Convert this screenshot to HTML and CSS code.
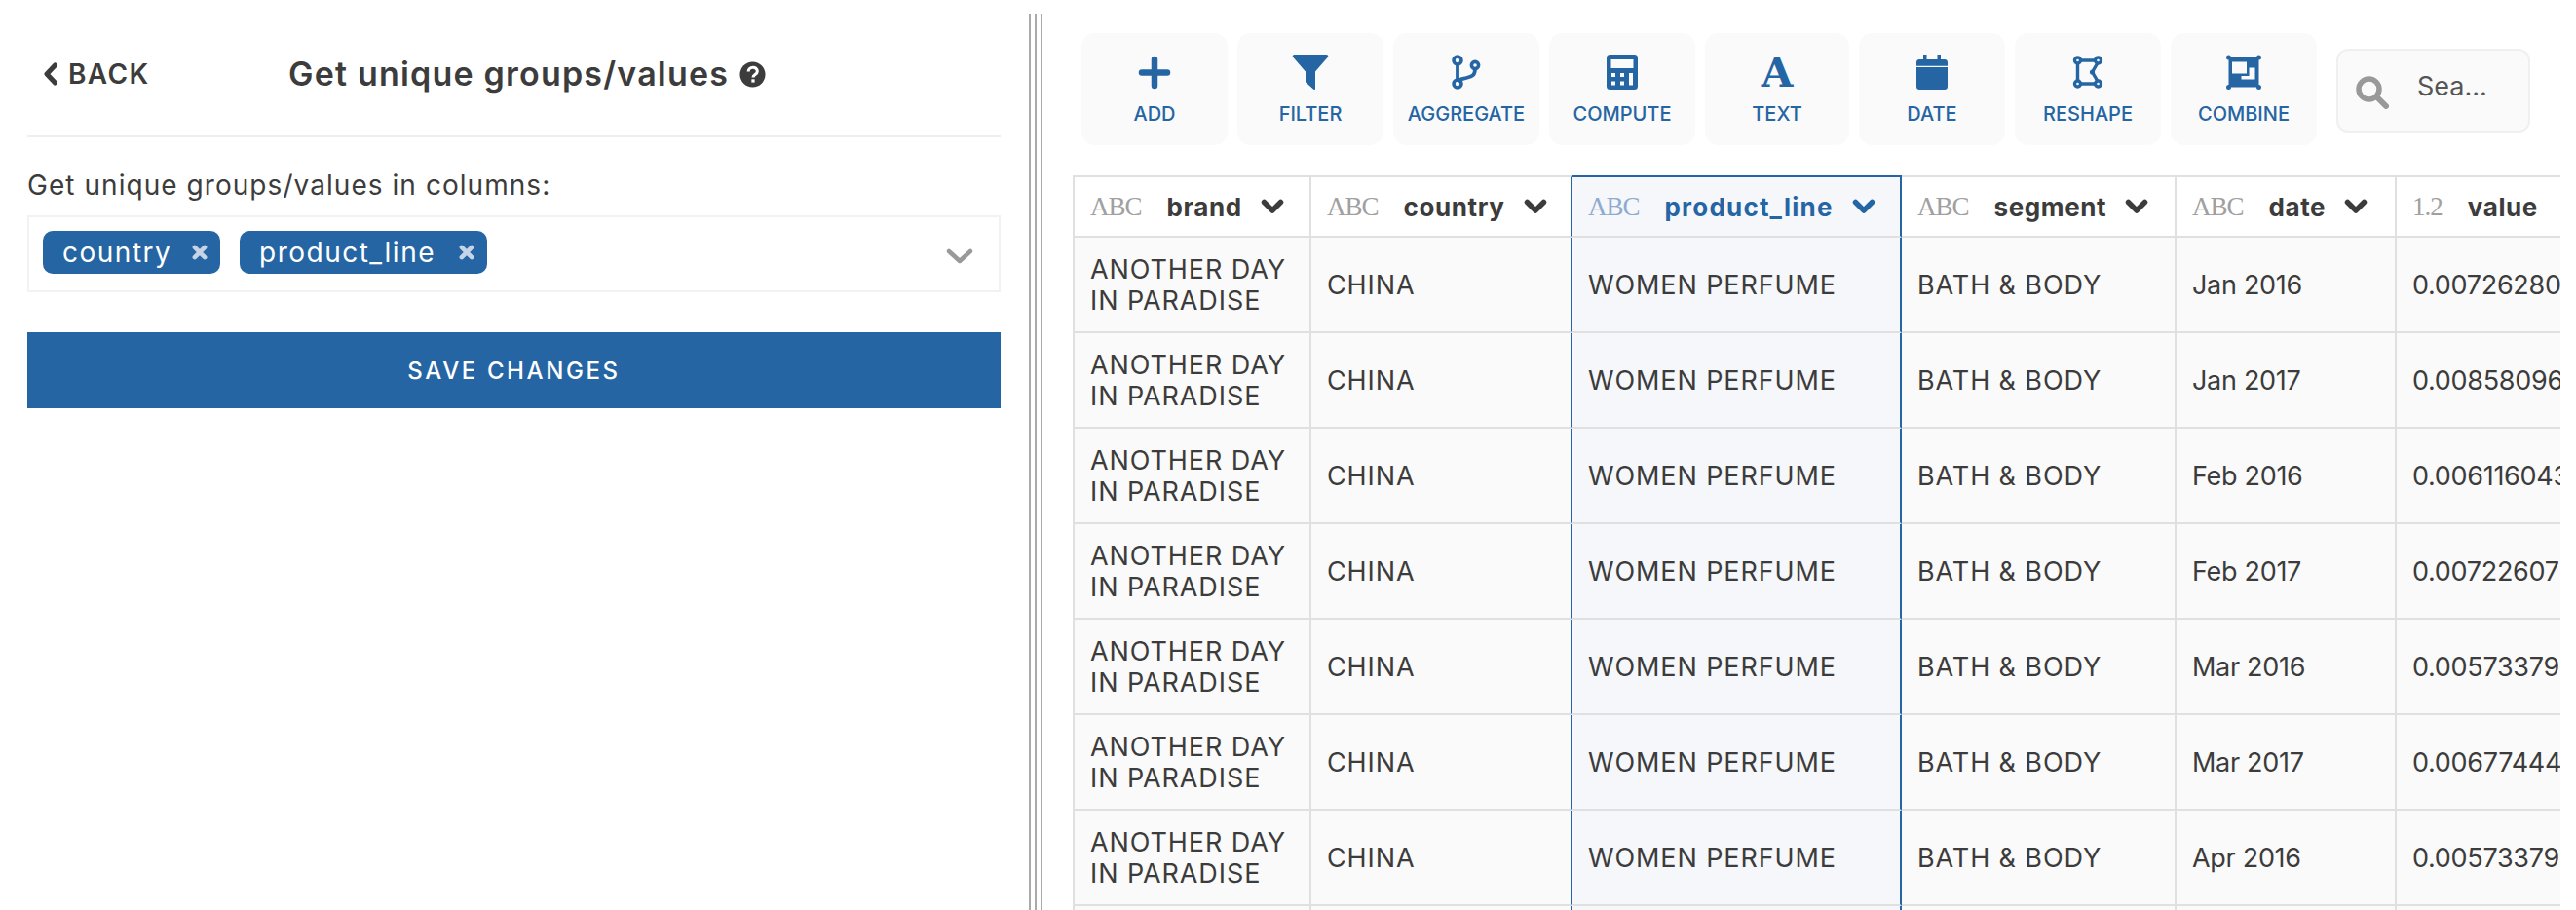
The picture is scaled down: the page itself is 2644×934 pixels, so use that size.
FILE: index.html
```html
<!DOCTYPE html>
<html lang="en">
<head>
<meta charset="utf-8">
<title>Get unique groups/values</title>
<link rel="stylesheet" href="styles.css">
</head>
<body>
<div class="app">
  <aside class="panel">
    <header class="panel-head">
      <a class="back">
        <svg class="back-icon" viewBox="0 0 16 24"><path d="M12.5 3 4 12l8.500 9" fill="none" stroke="currentColor" stroke-width="5" stroke-linecap="round" stroke-linejoin="round"/></svg>
        <span>BACK</span>
      </a>
      <h1 class="title">Get unique groups/values</h1>
      <svg class="help" viewBox="0 0 28 28"><circle cx="14" cy="14" r="13.500" fill="#3c3c3c"/><path d="M9.500 11c0-6 9.500-6 9.500-.3 0 3.300-4.500 3.300-4.500 6.300" fill="none" stroke="#fff" stroke-width="3.200"/><rect x="12.800" y="19" width="3.400" height="3.400" fill="#fff"/></svg>
    </header>
    <label class="field-label">Get unique groups/values in columns:</label>
    <div class="select">
      <span class="chip chip-country">country<svg class="chip-x" viewBox="0 0 14 14"><path d="M2.500 2.500l9 9M11.500 2.500l-9 9" stroke="currentColor" stroke-width="4" stroke-linecap="round"/></svg></span>
      <span class="chip chip-line">product_line<svg class="chip-x" viewBox="0 0 14 14"><path d="M2.500 2.500l9 9M11.500 2.500l-9 9" stroke="currentColor" stroke-width="4" stroke-linecap="round"/></svg></span>
      <svg class="select-caret" viewBox="0 0 28 16"><path d="M3 3l11 10L25 3" fill="none" stroke="currentColor" stroke-width="4.500" stroke-linecap="round" stroke-linejoin="round"/></svg>
    </div>
    <button class="save">SAVE CHANGES</button>
  </aside>

  <div class="divider"><i></i><i></i><i></i></div>

  <main class="work">
    <nav class="toolbar">
      <button class="tool">
        <svg class="ico" width="34" height="36" viewBox="0 0 34 36"><path d="M17 5v27M4 18.500h26" fill="none" stroke="currentColor" stroke-width="6.500" stroke-linecap="round"/></svg>
        <span>ADD</span>
      </button>
      <button class="tool">
        <svg class="ico" width="38" height="36" viewBox="0 0 38 36"><path d="M2.500 0h33c1.500 0 2.300 1.700 1.300 2.800L24 17.500V35c0 1-1 1.200-1.700.8l-7-6.300c-.8-.6-1.300-1-1.300-2V17.500L1.200 2.800C.2 1.700 1 0 2.500 0z" fill="currentColor"/></svg>
        <span>FILTER</span>
      </button>
      <button class="tool">
        <svg class="ico" width="32" height="36" viewBox="0 0 32 36"><g fill="none" stroke="currentColor" stroke-width="3.600"><circle cx="7" cy="6" r="4"/><circle cx="7" cy="30" r="4"/><circle cx="25" cy="11" r="3.600"/></g><path d="M7 10v16M25 14.500c0 8-4 8-9 9.500-5 1.300-8 1.500-9 4" fill="none" stroke="currentColor" stroke-width="3.800"/></svg>
        <span>AGGREGATE</span>
      </button>
      <button class="tool">
        <svg class="ico" width="32" height="36" viewBox="0 0 32 36"><rect width="32" height="36" rx="3.500" fill="currentColor"/><rect x="4.500" y="5" width="23" height="9" fill="#fafafa"/><g fill="#fafafa"><rect x="5" y="19" width="4" height="4"/><rect x="14" y="19" width="4" height="4"/><rect x="5" y="27.500" width="4" height="4"/><rect x="14" y="27.500" width="4" height="4"/><rect x="23" y="19" width="4" height="12.500"/></g></svg>
        <span>COMPUTE</span>
      </button>
      <button class="tool tool-narrow">
        <span class="ico ico-a">A</span>
        <span>TEXT</span>
      </button>
      <button class="tool">
        <svg class="ico" width="32" height="36" viewBox="0 0 32 36"><path d="M7 0h3.500v5h11V0H25v5h4c1.700 0 3 1.300 3 3v3.800H0V8c0-1.700 1.300-3 3-3h4zM0 13h32v20c0 1.700-1.300 3-3 3H3c-1.700 0-3-1.300-3-3z" fill="currentColor"/></svg>
        <span>DATE</span>
      </button>
      <button class="tool">
        <svg class="ico" width="32" height="36" viewBox="0 0 32 36"><g fill="none" stroke="currentColor" stroke-width="3.400"><path d="M8 6h16M5.500 9v18M9 30h14M26 8.500l-5.500 9.500 5.500 9.500"/><circle cx="5.500" cy="6" r="3"/><circle cx="26.500" cy="6" r="3"/><circle cx="5.500" cy="30" r="3"/><circle cx="26.500" cy="30" r="3"/></g><circle cx="20.500" cy="18" r="2.600" fill="currentColor"/></svg>
        <span>RESHAPE</span>
      </button>
      <button class="tool">
        <svg class="ico" width="36" height="36" viewBox="0 0 36 36"><path d="M0 3a2.500 2.500 0 0 1 5 0h26a2.500 2.500 0 0 1 2.500-2.500A2.500 2.500 0 0 1 36 3a2.500 2.500 0 0 1-2.500 2.500V31a2.500 2.500 0 1 1-2.500 2.500H5A2.500 2.500 0 1 1 2.500 31V5.500A2.500 2.500 0 0 1 0 3z" fill="currentColor"/><rect x="6" y="7.500" width="15" height="12" fill="#fafafa"/><path d="M23.500 13.500H29.500V25.500H15.500V22H23.500z" fill="#fafafa"/></svg>
        <span>COMBINE</span>
      </button>
      <div class="search">
        <svg class="search-ico" viewBox="0 0 34 34"><circle cx="13.500" cy="13.500" r="10.500" fill="none" stroke="currentColor" stroke-width="5.500"/><path d="M21.500 21.500 31 31" stroke="currentColor" stroke-width="6" stroke-linecap="round"/></svg>
        <span class="search-text">Sea...</span>
      </div>
    </nav>

    <div class="grid-wrap">
      <table class="grid">
        <colgroup><col class="c1"><col class="c2"><col class="c3"><col class="c4"><col class="c5"><col class="c6"></colgroup>
        <thead>
          <tr>
            <th><div class="hd"><span class="type">ABC</span><span class="name">brand</span><svg class="caret" viewBox="0 0 24 16"><path d="M3.500 3.500 12 12l8.500-8.500" fill="none" stroke="currentColor" stroke-width="5.500" stroke-linecap="round" stroke-linejoin="round"/></svg></div></th>
            <th class="before-sel"><div class="hd"><span class="type">ABC</span><span class="name">country</span><svg class="caret" viewBox="0 0 24 16"><path d="M3.500 3.500 12 12l8.500-8.500" fill="none" stroke="currentColor" stroke-width="5.500" stroke-linecap="round" stroke-linejoin="round"/></svg></div></th>
            <th class="sel"><div class="hd"><span class="type">ABC</span><span class="name">product_line</span><svg class="caret" viewBox="0 0 24 16"><path d="M3.500 3.500 12 12l8.500-8.500" fill="none" stroke="currentColor" stroke-width="5.500" stroke-linecap="round" stroke-linejoin="round"/></svg></div></th>
            <th><div class="hd"><span class="type">ABC</span><span class="name">segment</span><svg class="caret" viewBox="0 0 24 16"><path d="M3.500 3.500 12 12l8.500-8.500" fill="none" stroke="currentColor" stroke-width="5.500" stroke-linecap="round" stroke-linejoin="round"/></svg></div></th>
            <th><div class="hd"><span class="type">ABC</span><span class="name">date</span><svg class="caret" viewBox="0 0 24 16"><path d="M3.500 3.500 12 12l8.500-8.500" fill="none" stroke="currentColor" stroke-width="5.500" stroke-linecap="round" stroke-linejoin="round"/></svg></div></th>
            <th><div class="hd"><span class="type">1.2</span><span class="name">value</span></div></th>
          </tr>
        </thead>
        <tbody>
          <tr><td>ANOTHER DAY IN PARADISE</td><td class="before-sel">CHINA</td><td class="sel">WOMEN PERFUME</td><td>BATH &amp; BODY</td><td class="num">Jan 2016</td><td class="num">0.00726280</td></tr>
          <tr><td>ANOTHER DAY IN PARADISE</td><td class="before-sel">CHINA</td><td class="sel">WOMEN PERFUME</td><td>BATH &amp; BODY</td><td class="num">Jan 2017</td><td class="num">0.00858096</td></tr>
          <tr><td>ANOTHER DAY IN PARADISE</td><td class="before-sel">CHINA</td><td class="sel">WOMEN PERFUME</td><td>BATH &amp; BODY</td><td class="num">Feb 2016</td><td class="num">0.006116043</td></tr>
          <tr><td>ANOTHER DAY IN PARADISE</td><td class="before-sel">CHINA</td><td class="sel">WOMEN PERFUME</td><td>BATH &amp; BODY</td><td class="num">Feb 2017</td><td class="num">0.00722607</td></tr>
          <tr><td>ANOTHER DAY IN PARADISE</td><td class="before-sel">CHINA</td><td class="sel">WOMEN PERFUME</td><td>BATH &amp; BODY</td><td class="num">Mar 2016</td><td class="num">0.005733790</td></tr>
          <tr><td>ANOTHER DAY IN PARADISE</td><td class="before-sel">CHINA</td><td class="sel">WOMEN PERFUME</td><td>BATH &amp; BODY</td><td class="num">Mar 2017</td><td class="num">0.00677444</td></tr>
          <tr><td>ANOTHER DAY IN PARADISE</td><td class="before-sel">CHINA</td><td class="sel">WOMEN PERFUME</td><td>BATH &amp; BODY</td><td class="num">Apr 2016</td><td class="num">0.005733790</td></tr>
          <tr><td></td><td class="before-sel"></td><td class="sel"></td><td></td><td></td><td></td></tr>
        </tbody>
      </table>
    </div>
  </main>
</div>
</body>
</html>
```

FILE: styles.css
```css
* { box-sizing: border-box; }

html, body {
  margin: 0;
  height: 100%;
  overflow: hidden;
  background: #fff;
}

body {
  font-family: Inter, "Liberation Sans", sans-serif;
  color: #3c3c3c;
}

.app {
  display: flex;
  height: 934px;
  overflow: hidden;
}

/* Left panel */
.panel {
  width: 1056px;
  flex: none;
  padding: 0 29px 0 28px;
}

.panel-head {
  height: 141px;
  padding: 60px 0 0 16px;
  border-bottom: 2px solid #eee;
  display: flex;
  align-items: flex-start;
}

.back {
  display: flex;
  align-items: center;
  gap: 10px;
  height: 32px;
  width: 252px;
  font-size: 28px;
  font-weight: 600;
  letter-spacing: 1.4px;
}

.back-icon {
  width: 16px;
  height: 24px;
  flex: none;
}

.title {
  margin: 0 11px 0 0;
  font-size: 34px;
  line-height: 32px;
  font-weight: 600;
  letter-spacing: 1.2px;
  white-space: nowrap;
}

.help {
  width: 27px;
  height: 27px;
  margin-top: 3px;
  flex: none;
}

.field-label {
  display: block;
  margin-top: 32px;
  font-size: 28px;
  line-height: 34px;
  font-weight: 400;
  letter-spacing: 1.05px;
}

.select {
  height: 79px;
  margin-top: 14px;
  padding: 14px 14px 0;
  border: 2px solid #f2f2f2;
  display: flex;
  align-items: flex-start;
  gap: 20px;
}

.chip {
  height: 44px;
  padding-left: 20px;
  border-radius: 10px;
  background: #2565a3;
  color: #fff;
  font-size: 28px;
  line-height: 42px;
  font-weight: 400;
  letter-spacing: 1.5px;
  display: flex;
  align-items: center;
}

.chip-country { width: 182px; }
.chip-line { width: 254px; }

.chip-x {
  width: 16px;
  height: 16px;
  margin-left: auto;
  margin-right: 13px;
  color: #c6d4e8;
  flex: none;
}

.select-caret {
  width: 28px;
  height: 16px;
  color: #999;
  margin: 18px 12px 0 auto;
  flex: none;
}

.save {
  display: block;
  width: 100%;
  height: 78px;
  margin-top: 41px;
  border: 0;
  background: #2565a3;
  color: #fff;
  font-family: inherit;
  font-size: 24px;
  font-weight: 500;
  letter-spacing: 2.6px;
}

/* Divider */
.divider {
  width: 14px;
  flex: none;
  margin-top: 14px;
  display: flex;
  gap: 4px;
}

.divider i {
  width: 2px;
  background: #aaa;
}

/* Work area */
.work {
  flex: 1;
  min-width: 0;
  padding: 34px 0 0 31px;
}

.toolbar {
  display: flex;
  align-items: flex-start;
  gap: 10px;
  padding-left: 9px;
}

.tool {
  width: 150px;
  height: 115px;
  flex: none;
  padding: 22px 0 0;
  border: 0;
  border-radius: 14px;
  background: #fafafa;
  color: #2565a3;
  font-family: inherit;
  font-size: 20px;
  font-weight: 500;
  display: flex;
  flex-direction: column;
  align-items: center;
}

.tool-narrow { width: 148px; }

.tool span:last-child {
  margin-top: 13px;
  line-height: 24px;
}

.ico {
  display: block;
  height: 36px;
  flex: none;
}

.ico-a {
  font-family: "DejaVu Serif", serif;
  font-weight: 700;
  font-size: 42px;
  line-height: 38px;
}

.search {
  width: 199px;
  height: 86px;
  margin: 16px 0 0 10px;
  padding: 0 0 0 18px;
  border: 2px solid #f0f0f0;
  border-radius: 12px;
  background: #fafafa;
  display: flex;
  align-items: center;
}

.search-ico {
  width: 34px;
  height: 34px;
  color: #999;
  margin-top: 4px;
  flex: none;
}

.search-text {
  margin: -10px 0 0 29px;
  font-size: 27px;
  color: #555;
}

/* Table */
.grid-wrap {
  width: 1527px;
  margin-top: 31px;
  overflow: hidden;
}

.grid {
  width: 1759px;
  table-layout: fixed;
  border-collapse: separate;
  border-spacing: 0;
}

.c1 { width: 245px; }
.c2 { width: 268px; }
.c3 { width: 338px; }
.c4 { width: 282px; }
.c5 { width: 226px; }
.c6 { width: 400px; }

.grid th,
.grid td {
  padding: 0 0 0 16px;
  border-right: 2px solid #e0e0e0;
  border-bottom: 2px solid #e0e0e0;
  text-align: left;
  font-weight: 400;
}

.grid th {
  height: 64px;
  background: #fff;
  border-top: 2px solid #e0e0e0;
}

.grid td {
  height: 98px;
  padding-top: 2px;
  background: #fafafa;
  font-size: 27px;
  line-height: 32px;
  letter-spacing: 0.9px;
}

.grid td.num {
  letter-spacing: -0.3px;
  white-space: nowrap;
}

.grid th:first-child,
.grid td:first-child { border-left: 2px solid #e0e0e0; }

.grid .before-sel { border-right-color: #2565a3; }

.grid .sel {
  background: #f5f7fb;
  border-right-color: #2565a3;
}

.grid th.sel {
  border-top-color: #2565a3;
  background: #f5f7fb;
  color: #2565a3;
}

.hd {
  display: flex;
  align-items: center;
}

.type {
  font-family: "Liberation Serif", serif;
  font-size: 27px;
  letter-spacing: -1px;
  color: #a0a0a0;
  margin-right: 26px;
}

.sel .type { color: #8fabce; }

.name {
  font-size: 26px;
  font-weight: 700;
  letter-spacing: 0.6px;
}

.sel .name { letter-spacing: 1.2px; }

.caret {
  width: 24px;
  height: 16px;
  margin-left: 19px;
  flex: none;
}
```
